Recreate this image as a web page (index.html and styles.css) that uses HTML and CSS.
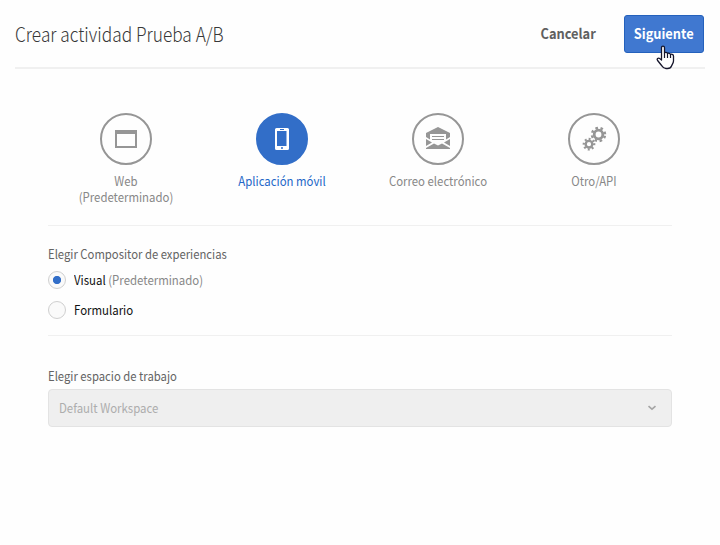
FILE: index.html
```html
<!DOCTYPE html>
<html lang="es">
<head>
<meta charset="utf-8">
<title>Crear actividad Prueba A/B</title>
<link rel="stylesheet" href="styles.css">
</head>
<body>
<main class="dialog">
  <header class="header">
    <h1 class="title">Crear actividad Prueba A/B</h1>
    <div class="actions">
      <button class="btn cancel"><span>Cancelar</span></button>
      <button class="btn primary"><span>Siguiente</span>
        <svg class="cursor" width="19" height="25" viewBox="0 0 19 25"><path d="M5.5 15V2.8C5.5.6 8.5.6 8.5 2.8V8c.5-1 3-.8 3 .8.5-1 3-.7 3 .9.6-.9 3-.6 3 1.3V16c0 2-1.5 3.500-2 5-.5 1.700-2 2.500-4 2.500H10c-2 0-3.200-1-4-2.500L1.600 15.500c-1.200-1.700.6-3.200 2.100-1.900z" fill="#fff" stroke="#15152b" stroke-width="1.300" stroke-linejoin="round"/><path d="M8.500 8v5M11.500 9v4M14.500 10v3" stroke="#15152b" stroke-width="1.200"/></svg>
      </button>
    </div>
  </header>
  <div class="content">
    <nav class="types">
      <div class="type">
        <div class="circle"><svg width="48" height="48" viewBox="0 0 48 48"><path fill="currentColor" fill-rule="evenodd" d="M13 15h22v18H13zM15 19v12h18V19z"/></svg></div>
        <div class="caption">Web<br>(Predeterminado)</div>
      </div>
      <div class="type selected">
        <div class="circle"><svg width="48" height="48" viewBox="0 0 48 48"><path fill="currentColor" fill-rule="evenodd" d="M18.500 13h11q1.500 0 1.500 1.500v19q0 1.500-1.500 1.500h-11q-1.500 0-1.500-1.500v-19q0-1.500 1.500-1.500zM19 16v15h9.500V16zM22 14v1h4V14zM24 32a1 1 0 1 0 0 2a1 1 0 0 0 0-2z"/></svg></div>
        <div class="caption">Aplicación móvil</div>
      </div>
      <div class="type">
        <div class="circle"><svg width="48" height="48" viewBox="0 0 48 48"><path fill="currentColor" d="M12 18L24 12l12 6v16H12z"/><path fill="#fefefe" d="M16 19h16V24.500l4-2.500v2L30 27.500l6 3.500v2L28 28.500 24 30.500l-4-2-8 4.500v-2L18 27.500l-6-3.500v-2l4 2.500z"/><path d="M18 21.500h12M18 24.500h12" stroke="currentColor"/></svg></div>
        <div class="caption">Correo electrónico</div>
      </div>
      <div class="type">
        <div class="circle"><svg width="48" height="48" viewBox="0 0 48 48" fill="none" stroke="currentColor"><circle cx="28.500" cy="19.500" r="4.300" stroke-width="2.800"/><circle cx="28.500" cy="19.500" r="6.500" stroke-width="2.500" stroke-dasharray="2.500 2.605" transform="rotate(11 28.500 19.500)"/><circle cx="19" cy="29.200" r="3.300" stroke-width="2.400"/><circle cx="19" cy="29.200" r="5.200" stroke-width="2.300" stroke-dasharray="1.900 2.184" transform="rotate(-10 19 29.200)"/></svg></div>
        <div class="caption">Otro/API</div>
      </div>
    </nav>
    <section class="composer">
      <div class="label">Elegir Compositor de experiencias</div>
      <div class="option"><i class="radio on"></i><span class="text">Visual <em>(Predeterminado)</em></span></div>
      <div class="option"><i class="radio"></i><span class="text">Formulario</span></div>
    </section>
    <section class="workspace">
      <div class="label">Elegir espacio de trabajo</div>
      <div class="select"><span class="text">Default Workspace</span><svg width="10" height="6" viewBox="0 0 10 6"><path d="M1.500 1.200L5 4.200 8.500 1.200" fill="none" stroke="#a5a5a5" stroke-width="1.600"/></svg></div>
    </section>
  </div>
</main>
</body>
</html>
```
FILE: styles.css
```css
* { box-sizing: border-box; }
body {
  margin: 0;
  background: #fff;
  font-family: "Noto Sans CJK JP", "Noto Sans", sans-serif;
  font-size: 12.5px;
  line-height: 16px;
  color: #646464;
}
.dialog { height: 545px; padding: 0 15px; background: #fefefe; border-radius: 2px; overflow: hidden; }
.header { height: 69px; display: flex; justify-content: space-between; align-items: center; border-bottom: 2px solid #f0f0f0; }
.title { margin: 0; font-size: 19.5px; font-weight: 300; line-height: 26px; color: #383838; white-space: nowrap; transform: scaleX(.887); transform-origin: left; }
.actions { display: flex; margin-right: 1px; }
.btn { height: 38px; padding: 0; font: bold 14px/20px "Noto Sans CJK JP", sans-serif; border-radius: 3px; border: 1px solid transparent; background: none; color: #606060; }
.btn span { display: inline-block; transform: translateY(-1px) scaleX(.915); }
.cancel { width: 90px; margin-right: 11px; }
.primary { width: 80px; position: relative; background: #4078d0; border-color: #2461bc; color: #fff; }
.cursor { position: absolute; left: 31px; top: 29px; z-index: 1; }
.content { padding: 0 33px; }
.types { height: 157px; padding-top: 44px; display: grid; grid-template-columns: repeat(4, 156px); border-bottom: 1px solid #f0f0f0; }
.type { color: #888; text-align: center; }
.circle { width: 52px; height: 52px; margin: 0 auto 8px; border: 2px solid #969696; border-radius: 50%; color: #969696; }
.circle svg { display: block; }
.selected { color: #2467c8; }
.selected .circle { background: #326ec8; border-color: #326ec8; color: #fff; }
.caption { white-space: nowrap; transform: scaleX(.91); }
.composer { height: 110px; padding-top: 20px; border-bottom: 1px solid #f0f0f0; }
.label { height: 16px; transform: scaleX(.903); transform-origin: left; }
.option { display: flex; align-items: center; height: 18px; margin-top: 9px; gap: 8px; color: #111; }
.option + .option { margin-top: 12px; }
.option em { font-style: normal; color: #888; }
.text { transform: scaleX(.914); transform-origin: left; }
.radio { width: 18px; height: 18px; border: 1px solid #cfcfcf; border-radius: 50%; background: #fafafa; }
.radio.on { background: radial-gradient(circle, #326ec8 3.700px, #fafafa 4.500px); }
.workspace { padding-top: 32px; }
.select { height: 38px; margin-top: 5px; padding: 0 14px 0 10px; border: 1px solid #e3e3e3; border-radius: 4px; background: #efefef; color: #adadad; display: flex; align-items: center; justify-content: space-between; }
```
